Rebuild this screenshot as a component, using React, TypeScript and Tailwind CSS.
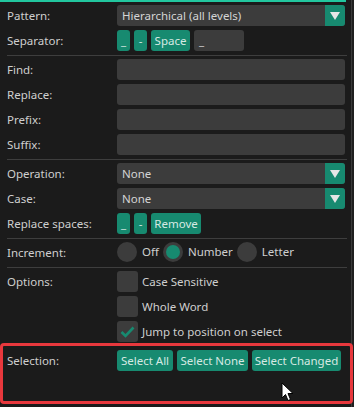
import React from "react";

const font = { fontFamily: '"Noto Sans", "Open Sans", sans-serif' };

function Label({ children }: { children: React.ReactNode }) {
  return <div className="w-[117px] shrink-0 pl-[7px] text-[11.5px] leading-[21px] text-[#cfcfcf]">{children}</div>;
}

function Row({ label, children, className = "" }: { label?: string; children?: React.ReactNode; className?: string }) {
  return (
    <div className={`flex items-start ${className}`}>
      <Label>{label}</Label>
      <div className="flex min-w-0 flex-1 items-center gap-1">{children}</div>
    </div>
  );
}

function Btn({ children, className = "" }: { children: React.ReactNode; className?: string }) {
  return (
    <button className={`h-[21px] shrink-0 whitespace-nowrap rounded-[3px] bg-[#178a70] px-0 text-center text-[11.5px] leading-[21px] text-[#d6e9e3] ${className}`}>
      {children}
    </button>
  );
}

function Input({ value = "", className = "" }: { value?: string; className?: string }) {
  return (
    <div className={`h-[21px] rounded-[3px] bg-[#3c3c3c] px-[5px] text-[11.5px] leading-[21px] text-[#d4d4d4] ${className}`}>
      {value}
    </div>
  );
}

function Combo({ value }: { value: string }) {
  return (
    <div className="flex h-[21px] flex-1 overflow-hidden rounded-[3px] bg-[#3c3c3c]">
      <div className="flex-1 px-[5px] text-[11.5px] leading-[21px] text-[#d4d4d4]">{value}</div>
      <div className="flex w-[20px] items-center justify-center bg-[#178a70]">
        <svg width="10" height="8" viewBox="0 0 10 8">
          <path d="M0 0 H10 L5 8 Z" fill="#e6e6e6" />
        </svg>
      </div>
    </div>
  );
}

function Sep({ className = "" }: { className?: string }) {
  return <div className={`ml-[7px] mr-[-2px] h-px bg-[#3e3e3e] ${className}`} />;
}

function Radio({ label, on = false }: { label: string; on?: boolean }) {
  return (
    <div className="flex items-center gap-[5px]">
      <div className="flex h-[20px] w-[20px] items-center justify-center rounded-full bg-[#3c3c3c]">
        {on && <div className="h-[14px] w-[14px] rounded-full bg-[#178a70]" />}
      </div>
      <span className="text-[11.5px] text-[#cfcfcf]">{label}</span>
    </div>
  );
}

function Check({ label, on = false }: { label: string; on?: boolean }) {
  return (
    <div className="flex items-center gap-[4px]">
      <div className="flex h-[21px] w-[21px] items-center justify-center rounded-[3px] bg-[#3c3c3c]">
        {on && (
          <svg width="15" height="12" viewBox="0 0 15 12">
            <path d="M1.5 6 L5.5 10 L13.5 1.5" fill="none" stroke="#178a70" strokeWidth="2.6" />
          </svg>
        )}
      </div>
      <span className="text-[11.5px] leading-[21px] text-[#cfcfcf]">{label}</span>
    </div>
  );
}

export default function App() {
  return (
    <div className="relative flex h-[407px] w-[354px] overflow-hidden bg-[#1b1b1b]" style={font}>
      <div className="w-[346px] border-t-2 border-[#22c79f] pr-px pt-[3px]">
        <Row label="Pattern:" className="mb-1">
          <Combo value="Hierarchical (all levels)" />
        </Row>
        <Row label="Separator:" className="mb-1">
          <Btn className="w-[13px]">_</Btn>
          <Btn className="w-[13px]">-</Btn>
          <Btn className="w-[39px]">Space</Btn>
          <Input value="_" className="w-[50px]" />
        </Row>
        <Sep className="mb-[3px]" />
        <Row label="Find:" className="mb-1">
          <Input className="flex-1" />
        </Row>
        <Row label="Replace:" className="mb-1">
          <Input className="flex-1" />
        </Row>
        <Row label="Prefix:" className="mb-1">
          <Input className="flex-1" />
        </Row>
        <Row label="Suffix:" className="mb-1">
          <Input className="flex-1" />
        </Row>
        <Sep className="mb-[3px]" />
        <Row label="Operation:" className="mb-1">
          <Combo value="None" />
        </Row>
        <Row label="Case:" className="mb-1">
          <Combo value="None" />
        </Row>
        <Row label="Replace spaces:" className="mb-1">
          <Btn className="w-[13px]">_</Btn>
          <Btn className="w-[13px]">-</Btn>
          <Btn className="w-[50px]">Remove</Btn>
        </Row>
        <Sep className="mb-[3px]" />
        <Row label="Increment:" className="mb-1">
          <Radio label="Off" />
          <Radio label="Number" on />
          <Radio label="Letter" />
        </Row>
        <Sep className="mb-[3px]" />
        <div className="mb-2 flex items-start">
          <Label>Options:</Label>
          <div className="flex flex-col gap-1">
            <Check label="Case Sensitive" />
            <Check label="Whole Word" />
            <Check label="Jump to position on select" on />
          </div>
        </div>
        <Row label="Selection:">
          <Btn className="w-[56px]">Select All</Btn>
          <Btn className="w-[71px]">Select None</Btn>
          <Btn className="w-[89px]">Select Changed</Btn>
        </Row>
      </div>
      <div className="ml-[5px] w-px bg-[#3a3a3a]" />
      <div className="flex-1 bg-[#202020]" />

      {/* highlight annotation */}
      <div className="pointer-events-none absolute left-0 top-[343px] h-[61px] w-[353px] rounded-[4px] border-[3px] border-[#e8383d]" />

      {/* mouse cursor */}
      <svg className="absolute left-[281px] top-[382px]" width="13" height="20" viewBox="0 0 13 20">
        <path d="M1 1 L1 16 L4.5 12.5 L7 18.5 L9.5 17.5 L7 11.5 L12 11.5 Z" fill="#fff" stroke="#000" strokeWidth="1" />
      </svg>
    </div>
  );
}
